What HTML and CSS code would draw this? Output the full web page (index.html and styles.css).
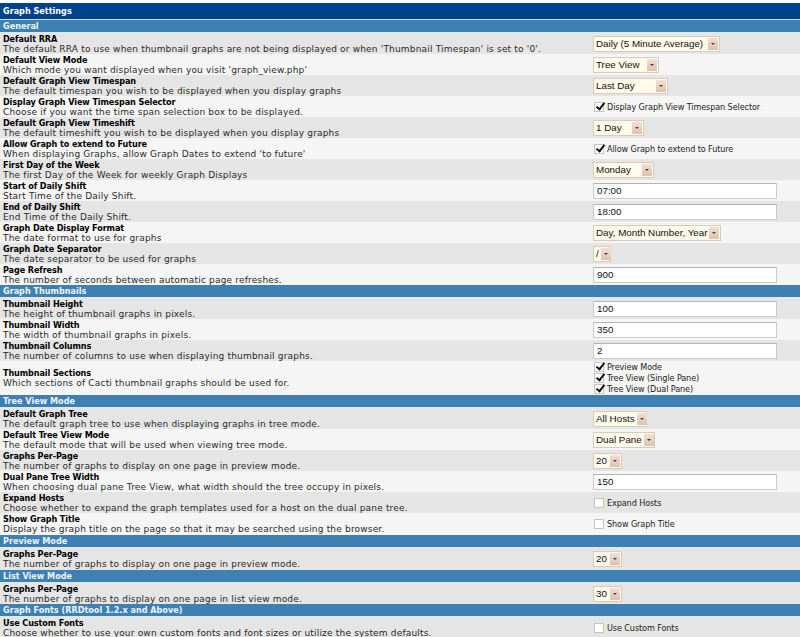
FILE: index.html
```html
<!DOCTYPE html>
<html>
<head>
<meta charset="utf-8">
<link rel="stylesheet" href="styles.css">
</head>
<body>
<div class="page">
  <div class="hdr">Graph Settings</div>

  <div class="sec">General</div>
  <div class="row dark">
    <div class="lbl"><b>Default RRA</b><span>The default RRA to use when thumbnail graphs are not being displayed or when 'Thumbnail Timespan' is set to '0'.</span></div>
    <div class="ctl"><div class="sel w-daily"><span class="v">Daily (5 Minute Average)</span><span class="arr"></span></div></div>
  </div>
  <div class="row light">
    <div class="lbl"><b>Default View Mode</b><span>Which mode you want displayed when you visit 'graph_view.php'</span></div>
    <div class="ctl"><div class="sel w-tree"><span class="v">Tree View</span><span class="arr"></span></div></div>
  </div>
  <div class="row dark">
    <div class="lbl"><b>Default Graph View Timespan</b><span>The default timespan you wish to be displayed when you display graphs</span></div>
    <div class="ctl"><div class="sel w-lastday"><span class="v">Last Day</span><span class="arr"></span></div></div>
  </div>
  <div class="row light">
    <div class="lbl"><b>Display Graph View Timespan Selector</b><span>Choose if you want the time span selection box to be displayed.</span></div>
    <div class="ctl"><label class="cb"><span class="box on"></span>Display Graph View Timespan Selector</label></div>
  </div>
  <div class="row dark">
    <div class="lbl"><b>Default Graph View Timeshift</b><span>The default timeshift you wish to be displayed when you display graphs</span></div>
    <div class="ctl"><div class="sel w-oneday"><span class="v">1 Day</span><span class="arr"></span></div></div>
  </div>
  <div class="row light">
    <div class="lbl"><b>Allow Graph to extend to Future</b><span>When displaying Graphs, allow Graph Dates to extend 'to future'</span></div>
    <div class="ctl"><label class="cb"><span class="box on"></span>Allow Graph to extend to Future</label></div>
  </div>
  <div class="row dark">
    <div class="lbl"><b>First Day of the Week</b><span>The first Day of the Week for weekly Graph Displays</span></div>
    <div class="ctl"><div class="sel w-monday"><span class="v">Monday</span><span class="arr"></span></div></div>
  </div>
  <div class="row light">
    <div class="lbl"><b>Start of Daily Shift</b><span>Start Time of the Daily Shift.</span></div>
    <div class="ctl"><div class="inp">07:00</div></div>
  </div>
  <div class="row dark">
    <div class="lbl"><b>End of Daily Shift</b><span>End Time of the Daily Shift.</span></div>
    <div class="ctl"><div class="inp">18:00</div></div>
  </div>
  <div class="row light">
    <div class="lbl"><b>Graph Date Display Format</b><span>The date format to use for graphs</span></div>
    <div class="ctl"><div class="sel"><span class="v">Day, Month Number, Year</span><span class="arr"></span></div></div>
  </div>
  <div class="row dark">
    <div class="lbl"><b>Graph Date Separator</b><span>The date separator to be used for graphs</span></div>
    <div class="ctl"><div class="sel w-sep"><span class="v">/</span><span class="arr"></span></div></div>
  </div>
  <div class="row light">
    <div class="lbl"><b>Page Refresh</b><span>The number of seconds between automatic page refreshes.</span></div>
    <div class="ctl"><div class="inp">900</div></div>
  </div>

  <div class="sec">Graph Thumbnails</div>
  <div class="row dark">
    <div class="lbl"><b>Thumbnail Height</b><span>The height of thumbnail graphs in pixels.</span></div>
    <div class="ctl"><div class="inp">100</div></div>
  </div>
  <div class="row light">
    <div class="lbl"><b>Thumbnail Width</b><span>The width of thumbnail graphs in pixels.</span></div>
    <div class="ctl"><div class="inp">350</div></div>
  </div>
  <div class="row dark">
    <div class="lbl"><b>Thumbnail Columns</b><span>The number of columns to use when displaying thumbnail graphs.</span></div>
    <div class="ctl"><div class="inp">2</div></div>
  </div>
  <div class="row light tall">
    <div class="lbl"><b>Thumbnail Sections</b><span>Which sections of Cacti thumbnail graphs should be used for.</span></div>
    <div class="ctl stack">
      <label class="cb"><span class="box on"></span>Preview Mode</label>
      <label class="cb"><span class="box on"></span>Tree View (Single Pane)</label>
      <label class="cb"><span class="box on"></span>Tree View (Dual Pane)</label>
    </div>
  </div>

  <div class="sec">Tree View Mode</div>
  <div class="row dark">
    <div class="lbl"><b>Default Graph Tree</b><span>The default graph tree to use when displaying graphs in tree mode.</span></div>
    <div class="ctl"><div class="sel w-hosts"><span class="v">All Hosts</span><span class="arr"></span></div></div>
  </div>
  <div class="row light">
    <div class="lbl"><b>Default Tree View Mode</b><span>The default mode that will be used when viewing tree mode.</span></div>
    <div class="ctl"><div class="sel w-dual"><span class="v">Dual Pane</span><span class="arr"></span></div></div>
  </div>
  <div class="row dark">
    <div class="lbl"><b>Graphs Per-Page</b><span>The number of graphs to display on one page in preview mode.</span></div>
    <div class="ctl"><div class="sel w-num"><span class="v">20</span><span class="arr"></span></div></div>
  </div>
  <div class="row light">
    <div class="lbl"><b>Dual Pane Tree Width</b><span>When choosing dual pane Tree View, what width should the tree occupy in pixels.</span></div>
    <div class="ctl"><div class="inp">150</div></div>
  </div>
  <div class="row dark">
    <div class="lbl"><b>Expand Hosts</b><span>Choose whether to expand the graph templates used for a host on the dual pane tree.</span></div>
    <div class="ctl"><label class="cb"><span class="box"></span>Expand Hosts</label></div>
  </div>
  <div class="row light last">
    <div class="lbl"><b>Show Graph Title</b><span>Display the graph title on the page so that it may be searched using the browser.</span></div>
    <div class="ctl"><label class="cb"><span class="box"></span>Show Graph Title</label></div>
  </div>

  <div class="sec">Preview Mode</div>
  <div class="row dark single">
    <div class="lbl"><b>Graphs Per-Page</b><span>The number of graphs to display on one page in preview mode.</span></div>
    <div class="ctl"><div class="sel w-num"><span class="v">20</span><span class="arr"></span></div></div>
  </div>

  <div class="sec">List View Mode</div>
  <div class="row dark">
    <div class="lbl"><b>Graphs Per-Page</b><span>The number of graphs to display on one page in list view mode.</span></div>
    <div class="ctl"><div class="sel w-num"><span class="v">30</span><span class="arr"></span></div></div>
  </div>

  <div class="sec">Graph Fonts (RRDtool 1.2.x and Above)</div>
  <div class="row dark">
    <div class="lbl"><b>Use Custom Fonts</b><span>Choose whether to use your own custom fonts and font sizes or utilize the system defaults.</span></div>
    <div class="ctl"><label class="cb"><span class="box"></span>Use Custom Fonts</label></div>
  </div>
</div>
</body>
</html>
```

FILE: styles.css
```css
html, body {
  margin: 0;
  padding: 0;
  background: #ffffff;
}

.page {
  padding-top: 3px;
  font-family: "DejaVu Sans", Verdana, sans-serif;
  font-size: 9px;
  color: #000;
}

.hdr,
.sec,
.lbl b {
  font-family: "DejaVu Sans Condensed", "DejaVu Sans", Verdana, sans-serif;
  font-weight: bold;
}

.hdr {
  background: #00438c;
  color: #ffffff;
  height: 16px;
  line-height: 16px;
  padding-left: 3px;
  border-bottom: 1px solid #cfe3ee;
}

.sec {
  background: #3f80b2;
  color: #eef4fa;
  height: 12px;
  line-height: 12px;
  padding-left: 3px;
  border-bottom: 1px solid #d6ebf2;
}

.row {
  display: grid;
  grid-template-columns: 1fr 210px;
  height: 21px;
  align-items: center;
}

.row.tall {
  height: 34px;
}

.row.last,
.row.single {
  height: 22px;
}

.dark {
  background: #e5e5e5;
}

.light {
  background: #f5f5f5;
}

.lbl {
  display: flex;
  flex-direction: column;
  padding-left: 3px;
  line-height: 10px;
  white-space: nowrap;
  overflow: hidden;
}

.lbl b {
  color: #000;
  letter-spacing: -0.1px;
}

.lbl span {
  color: #2a2a2a;
  letter-spacing: 0.18px;
}

.ctl {
  padding-left: 3px;
  display: flex;
  align-items: center;
}

.ctl.stack {
  flex-direction: column;
  align-items: flex-start;
}

.sel {
  display: inline-flex;
  align-items: stretch;
  justify-content: space-between;
  height: 16px;
  box-sizing: border-box;
  border: 1px solid #d8cbbd;
  background: #fffaea;
  font-family: "Liberation Sans", Arial, sans-serif;
  font-size: 9.8px;
  color: #111;
}

.w-daily { width: 127px; }
.w-tree { width: 66px; }
.w-lastday { width: 75px; }
.w-oneday { width: 51px; }
.w-monday { width: 61px; }
.w-sep { width: 18px; }
.w-hosts { width: 54px; }
.w-dual { width: 62px; }
.w-num { width: 29px; }

.sel .v {
  padding-left: 2px;
  padding-right: 1px;
  line-height: 14px;
  white-space: nowrap;
}

.sel .arr {
  flex: none;
  width: 10px;
  margin: 1px;
  background: linear-gradient(#f0e0d3, #dcc3b0);
  position: relative;
}

.sel .arr::after {
  content: "";
  position: absolute;
  left: 3px;
  top: 5px;
  border-left: 2px solid transparent;
  border-right: 2px solid transparent;
  border-top: 2px solid #444;
}

.inp {
  width: 184px;
  height: 16px;
  box-sizing: border-box;
  border: 1px solid #cacaca;
  border-top-color: #b4b4b4;
  background: #ffffff;
  font-family: "Liberation Sans", Arial, sans-serif;
  font-size: 9.8px;
  line-height: 14px;
  padding-left: 3px;
  color: #111;
}

.cb {
  display: flex;
  align-items: center;
  height: 11px;
  color: #222;
  white-space: nowrap;
  font-family: "DejaVu Sans Condensed", "DejaVu Sans", Verdana, sans-serif;
  letter-spacing: -0.1px;
}

.box {
  width: 10px;
  height: 10px;
  box-sizing: border-box;
  border: 1px solid #c4c4c4;
  background: #fff;
  margin-right: 3px;
  margin-left: 1px;
  position: relative;
}

.box.on::after {
  content: "";
  position: absolute;
  left: 3px;
  top: -2px;
  width: 3px;
  height: 7px;
  border-right: 2px solid #111;
  border-bottom: 2px solid #111;
  transform: rotate(38deg);
}
```
